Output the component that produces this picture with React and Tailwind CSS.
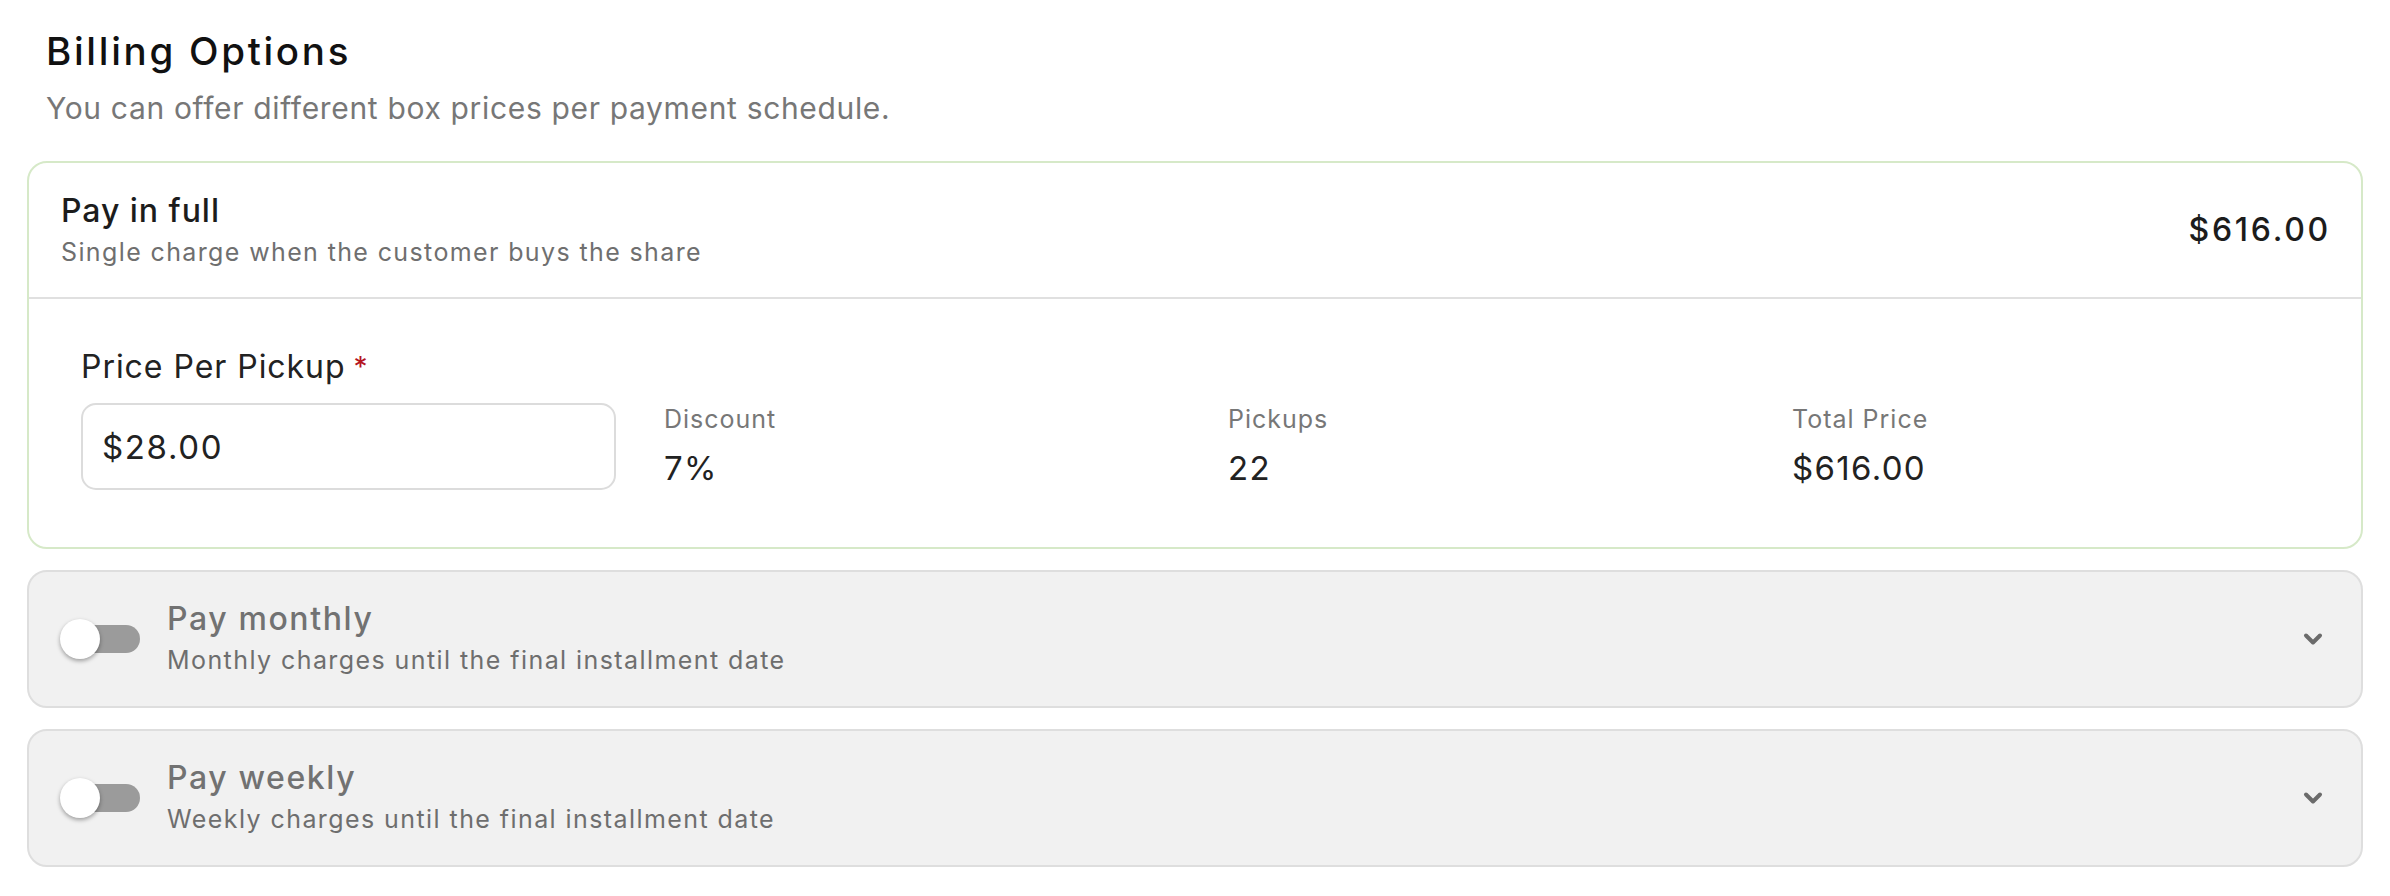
import React from "react";

function Chevron() {
  return (
    <svg width="20" height="14" viewBox="0 0 20 14" fill="none" className="shrink-0">
      <path d="M3 3.5 L10 10.5 L17 3.5" stroke="#6b6b6b" strokeWidth="4" strokeLinecap="round" strokeLinejoin="round" />
    </svg>
  );
}

function Toggle() {
  return (
    <div className="relative w-[80px] h-[40px] shrink-0">
      <div className="absolute left-[8px] top-[6px] w-[72px] h-[28px] rounded-full bg-[#9b9b9b]" />
      <div className="absolute left-0 top-0 w-[40px] h-[40px] rounded-full bg-white shadow-[0_2px_4px_rgba(0,0,0,0.35)]" />
    </div>
  );
}

function Stat({ label, value }) {
  return (
    <div className="pl-[19px] flex flex-col">
      <div className="text-[25px] leading-[32px] text-[#777777] tracking-[0.04em]">{label}</div>
      <div className="mt-[13px] text-[33px] leading-[40px] text-[#222222] tracking-[0.04em]">{value}</div>
    </div>
  );
}

function OptionCard({ title, desc }) {
  return (
    <div className="h-[138px] rounded-[20px] border-2 border-[#dedede] bg-[#f1f1f1] flex items-center pl-[31px] pr-[38px]">
      <Toggle />
      <div className="ml-[27px] flex-1 flex flex-col">
        <div className="text-[32px] leading-[38px] font-medium text-[#727272] tracking-[0.05em]">{title}</div>
        <div className="mt-[3px] text-[25px] leading-[38px] text-[#6e6e6e] tracking-[0.057em]">{desc}</div>
      </div>
      <Chevron />
    </div>
  );
}

export default function App() {
  return (
    <div className="w-[2390px] h-[896px] bg-white px-[27px] pt-[27px]" style={{ fontFamily: "Inter, 'Open Sans', sans-serif" }}>
      <div className="pl-[19px]">
        <div className="text-[38.5px] leading-[48px] font-medium text-[#111111] tracking-[0.07em]">Billing Options</div>
        <div className="mt-[13px] text-[30px] leading-[40px] text-[#777777] tracking-[0.022em]">
          You can offer different box prices per payment schedule.
        </div>
      </div>

      <div className="mt-[33px] rounded-[20px] border-2 border-[#d6e9c8] bg-white">
        <div className="h-[136px] border-b-2 border-[#e0e0e0] flex items-start justify-between pl-[32px] pr-[30px]">
          <div className="pt-[29px] flex flex-col">
            <div className="text-[32px] leading-[38px] font-medium text-[#1c1c1c] tracking-[0.03em]">Pay in full</div>
            <div className="mt-[3px] text-[25px] leading-[38px] text-[#6f6f6f] tracking-[0.055em]">
              Single charge when the customer buys the share
            </div>
          </div>
          <div className="self-center text-[32px] leading-[40px] font-medium text-[#1c1c1c] tracking-[0.085em]">$616.00</div>
        </div>
        <div className="pl-[52px] pr-[52px] pt-[48px] pb-[57px]">
          <div className="text-[32px] leading-[40px] text-[#222222] tracking-[0.03em]">
            Price Per Pickup<span className="ml-[8px] text-[#b5161e] text-[28px] align-top">*</span>
          </div>
          <div className="mt-[16px] grid grid-cols-4 gap-[28px]">
            <div className="h-[87px] w-[535px] rounded-[15px] border-2 border-[#dcdcdc] flex items-center pl-[19px]">
              <span className="text-[33px] leading-[40px] text-[#222222] tracking-[0.05em]">$28.00</span>
            </div>
            <Stat label="Discount" value="7%" />
            <Stat label="Pickups" value="22" />
            <Stat label="Total Price" value="$616.00" />
          </div>
        </div>
      </div>

      <div className="mt-[21px] flex flex-col gap-[21px]">
        <OptionCard title="Pay monthly" desc="Monthly charges until the final installment date" />
        <OptionCard title="Pay weekly" desc="Weekly charges until the final installment date" />
      </div>
    </div>
  );
}
